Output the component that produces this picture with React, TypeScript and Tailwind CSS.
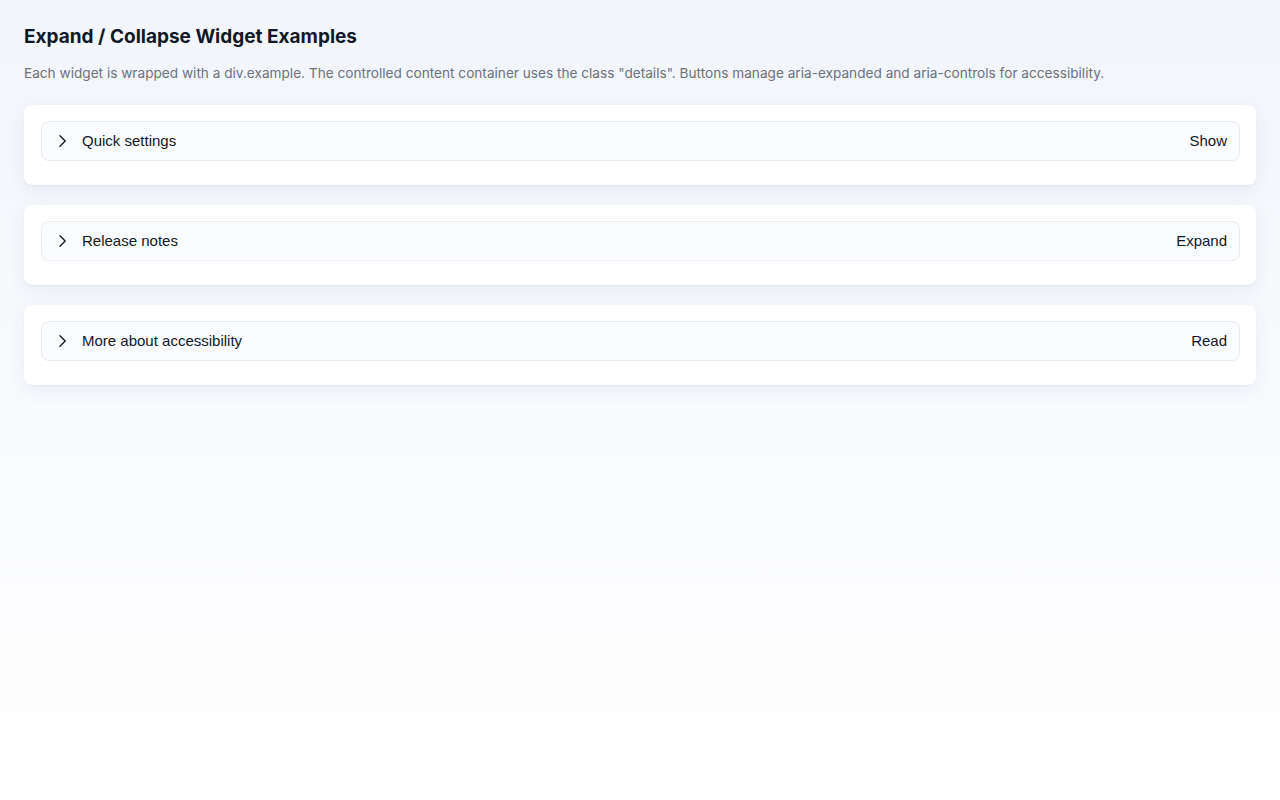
import { useState } from "react";

interface WidgetProps {
  id: string;
  title: string;
  action: string;
  children: React.ReactNode;
}

function Widget({ id, title, action, children }: WidgetProps) {
  const [open, setOpen] = useState(false);

  return (
    <div className="example rounded-lg bg-white pt-4 pr-4 pb-6 pl-[17px] shadow-[0_6px_18px_rgba(30,64,175,0.07),0_1px_2px_rgba(15,23,42,0.04)]">
      <button
        type="button"
        aria-expanded={open}
        aria-controls={id}
        onClick={() => setOpen(!open)}
        className="flex h-10 w-full items-center gap-3 rounded-lg border border-[#e8ebf0] bg-[#fbfcfe] pr-3 pl-3 text-left font-['Liberation_Sans',Arial,sans-serif] text-[15px] text-[#111827]"
      >
        <svg
          viewBox="0 0 16 16"
          className={`size-4 shrink-0 ${open ? "rotate-90" : ""}`}
          fill="none"
          stroke="currentColor"
          strokeWidth="1.35"
          strokeLinecap="round"
          strokeLinejoin="round"
          aria-hidden
        >
          <path d="M6 2.8 11.2 8 6 13.2" />
        </svg>
        <span className="flex-1">{title}</span>
        <span>{open ? "Hide" : action}</span>
      </button>
      <div id={id} className="details" hidden={!open}>
        <div className="pt-3 text-[13px] text-[#4b5563]">{children}</div>
      </div>
    </div>
  );
}

export default function App() {
  return (
    <div className="min-h-[800px] bg-gradient-to-b from-[#f2f5fb] to-[#ffffff] px-6 pt-[23px] font-['Inter',sans-serif]">
      <h1 className="text-[19px] leading-7 font-bold text-[#111827]">
        Expand / Collapse Widget Examples
      </h1>
      <p className="mt-[12px] text-[13.64px] leading-5 text-[#6b7280]">
        Each widget is wrapped with a div.example. The controlled content container uses the class "details". Buttons manage aria-expanded and aria-controls for accessibility.
      </p>

      <div className="mt-[22px] flex flex-col gap-5">
        <Widget id="quick-settings" title="Quick settings" action="Show">
          Toggle notifications, theme and language preferences.
        </Widget>
        <Widget id="release-notes" title="Release notes" action="Expand">
          Version 2.4 brings faster loading and bug fixes.
        </Widget>
        <Widget id="a11y" title="More about accessibility" action="Read">
          Use aria-expanded and aria-controls to describe the toggle state.
        </Widget>
      </div>
    </div>
  );
}
